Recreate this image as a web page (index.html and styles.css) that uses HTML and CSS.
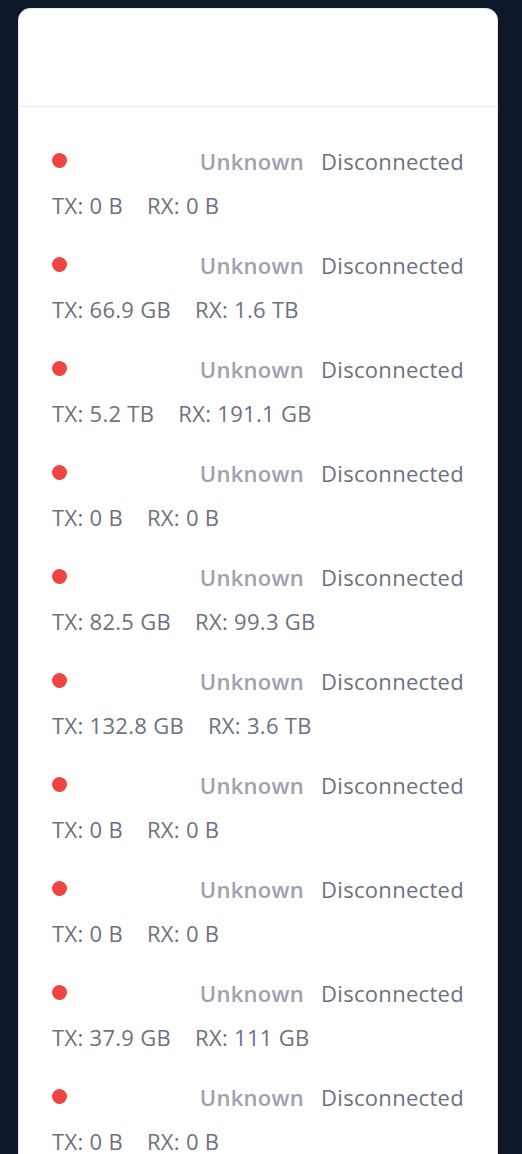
FILE: index.html
```html
<!DOCTYPE html>
<html lang="en">
<head>
<meta charset="utf-8">
<title>Connections</title>
<link rel="stylesheet" href="styles.css">
</head>
<body>
<div class="page">
  <div class="card">
    <div class="card-header"></div>
    <div class="list">
      <div class="row"><div class="top"><span class="dot"></span><span class="meta"><span class="unknown">Unknown</span><span class="state">Disconnected</span></span></div><div class="traffic"><span>TX: 0 B</span><span>RX: 0 B</span></div></div>
      <div class="row"><div class="top"><span class="dot"></span><span class="meta"><span class="unknown">Unknown</span><span class="state">Disconnected</span></span></div><div class="traffic"><span>TX: 66.9 GB</span><span>RX: 1.6 TB</span></div></div>
      <div class="row"><div class="top"><span class="dot"></span><span class="meta"><span class="unknown">Unknown</span><span class="state">Disconnected</span></span></div><div class="traffic"><span>TX: 5.2 TB</span><span>RX: 191.1 GB</span></div></div>
      <div class="row"><div class="top"><span class="dot"></span><span class="meta"><span class="unknown">Unknown</span><span class="state">Disconnected</span></span></div><div class="traffic"><span>TX: 0 B</span><span>RX: 0 B</span></div></div>
      <div class="row"><div class="top"><span class="dot"></span><span class="meta"><span class="unknown">Unknown</span><span class="state">Disconnected</span></span></div><div class="traffic"><span>TX: 82.5 GB</span><span>RX: 99.3 GB</span></div></div>
      <div class="row"><div class="top"><span class="dot"></span><span class="meta"><span class="unknown">Unknown</span><span class="state">Disconnected</span></span></div><div class="traffic"><span>TX: 132.8 GB</span><span>RX: 3.6 TB</span></div></div>
      <div class="row"><div class="top"><span class="dot"></span><span class="meta"><span class="unknown">Unknown</span><span class="state">Disconnected</span></span></div><div class="traffic"><span>TX: 0 B</span><span>RX: 0 B</span></div></div>
      <div class="row"><div class="top"><span class="dot"></span><span class="meta"><span class="unknown">Unknown</span><span class="state">Disconnected</span></span></div><div class="traffic"><span>TX: 0 B</span><span>RX: 0 B</span></div></div>
      <div class="row"><div class="top"><span class="dot"></span><span class="meta"><span class="unknown">Unknown</span><span class="state">Disconnected</span></span></div><div class="traffic"><span>TX: 37.9 GB</span><span>RX: 111 GB</span></div></div>
      <div class="row"><div class="top"><span class="dot"></span><span class="meta"><span class="unknown">Unknown</span><span class="state">Disconnected</span></span></div><div class="traffic"><span>TX: 0 B</span><span>RX: 0 B</span></div></div>
    </div>
  </div>
</div>
</body>
</html>
```

FILE: styles.css
```css
html, body {
  margin: 0;
  padding: 0;
  background: #0f172a;
  font-family: "Open Sans", "Noto Sans", sans-serif;
  overflow: hidden;
}
.page {
  padding: 8px 24px 0 18px;
}
.card {
  background: #ffffff;
  border: 1px solid #e5e7eb;
  border-radius: 12px;
  box-sizing: border-box;
  width: 480px;
}
.card-header {
  height: 97px;
  border-bottom: 1px solid #e5e7eb;
}
.list {
  padding: 24px 33px;
}
.row {
  padding: 16px 0;
  display: flex;
  flex-direction: column;
  gap: 16px;
}
.top {
  display: flex;
  align-items: center;
  justify-content: space-between;
  height: 28px;
}
.dot {
  width: 15px;
  height: 15px;
  border-radius: 50%;
  background: #ef4444;
  margin-top: -2px;
}
.meta {
  display: flex;
  gap: 17px;
  font-size: 22px;
  line-height: 28px;
  letter-spacing: 0.3px;
}
.unknown {
  color: #9ca3af;
  font-weight: 600;
}
.state {
  color: #6b7280;
}
.traffic {
  display: flex;
  gap: 24px;
  font-size: 22px;
  line-height: 28px;
  letter-spacing: 0.3px;
  color: #6b7280;
}
```
